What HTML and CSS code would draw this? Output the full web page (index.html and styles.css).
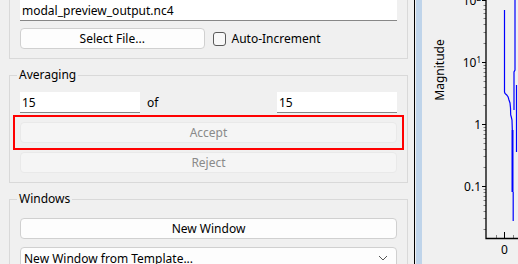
FILE: index.html
```html
<!DOCTYPE html>
<html lang="en">
<head>
  <meta charset="UTF-8" />
  <title>Modal Preview</title>
  <link rel="stylesheet" href="styles.css">
</head>
<body>

<div class="app">
  <div class="side">
    <fieldset class="group group-file">
      <input class="field" type="text" value="modal_preview_output.nc4">
      <div class="file-row">
        <button class="btn">Select File...</button>
        <label class="check"><span class="box"></span>Auto-Increment</label>
      </div>
    </fieldset>

    <fieldset class="group">
      <legend>Averaging</legend>
      <div class="avg-row">
        <input class="field" type="text" value="15">
        <span class="of">of</span>
        <input class="field" type="text" value="15">
      </div>
      <div class="highlight">
        <button class="btn" disabled>Accept</button>
      </div>
      <button class="btn" disabled>Reject</button>
    </fieldset>

    <fieldset class="group group-windows">
      <legend>Windows</legend>
      <button class="btn">New Window</button>
      <div class="combo">
        <span>New Window from Template...</span>
        <svg width="10" height="6" viewBox="0 0 10 6"><path d="M1 1 L5 5 L9 1" fill="none" stroke="#555" stroke-width="1"/></svg>
      </div>
    </fieldset>
  </div>

  <div class="splitter"></div>
  <div class="handle"></div>

  <div class="plot">
    <svg width="96" height="264" viewBox="422 0 96 264">
      <!-- y label -->
      <text class="ylabel" x="439.5" y="70" transform="rotate(-90 439.5 70)">Magnitude</text>

      <!-- tick labels -->
      <text class="tick" x="481" y="5">10<tspan class="sup" dy="-4">2</tspan></text>
      <text class="tick" x="481" y="67">10<tspan class="sup" dy="-4">1</tspan></text>
      <text class="tick" x="481" y="128.5">1</text>
      <text class="tick" x="481" y="190.5">0.1</text>
      <text class="tick mid" x="504.5" y="254">0</text>

      <!-- major ticks -->
      <g stroke="#000" stroke-width="1">
        <line x1="482" y1="0.5" x2="486" y2="0.5"/>
        <line x1="482" y1="62.5" x2="486" y2="62.5"/>
        <line x1="482" y1="124.5" x2="486" y2="124.5"/>
        <line x1="482" y1="186.5" x2="486" y2="186.5"/>
        <line x1="504.5" y1="232" x2="504.5" y2="238"/>
      </g>

      <!-- minor ticks -->
      <g stroke="#808080" stroke-width="1">
        <line x1="483.5" y1="5.5" x2="486" y2="5.5"/>
        <line x1="483.5" y1="9.5" x2="486" y2="9.5"/>
        <line x1="483.5" y1="13.5" x2="486" y2="13.5"/>
        <line x1="483.5" y1="18.5" x2="486" y2="18.5"/>
        <line x1="483.5" y1="24.5" x2="486" y2="24.5"/>
        <line x1="483.5" y1="32.5" x2="486" y2="32.5"/>
        <line x1="483.5" y1="43.5" x2="486" y2="43.5"/>

        <line x1="483.5" y1="65.5" x2="486" y2="65.5"/>
        <line x1="483.5" y1="68.5" x2="486" y2="68.5"/>
        <line x1="483.5" y1="72.5" x2="486" y2="72.5"/>
        <line x1="483.5" y1="76.5" x2="486" y2="76.5"/>
        <line x1="483.5" y1="81.5" x2="486" y2="81.5"/>
        <line x1="483.5" y1="87.5" x2="486" y2="87.5"/>
        <line x1="483.5" y1="94.5" x2="486" y2="94.5"/>
        <line x1="483.5" y1="105.5" x2="486" y2="105.5"/>

        <line x1="483.5" y1="127.5" x2="486" y2="127.5"/>
        <line x1="483.5" y1="130.5" x2="486" y2="130.5"/>
        <line x1="483.5" y1="134.5" x2="486" y2="134.5"/>
        <line x1="483.5" y1="138.5" x2="486" y2="138.5"/>
        <line x1="483.5" y1="143.5" x2="486" y2="143.5"/>
        <line x1="483.5" y1="149.5" x2="486" y2="149.5"/>
        <line x1="483.5" y1="156.5" x2="486" y2="156.5"/>
        <line x1="483.5" y1="167.5" x2="486" y2="167.5"/>

        <line x1="483.5" y1="189.5" x2="486" y2="189.5"/>
        <line x1="483.5" y1="192.5" x2="486" y2="192.5"/>
        <line x1="483.5" y1="196.5" x2="486" y2="196.5"/>
        <line x1="483.5" y1="200.5" x2="486" y2="200.5"/>
        <line x1="483.5" y1="205.5" x2="486" y2="205.5"/>
        <line x1="483.5" y1="211.5" x2="486" y2="211.5"/>
        <line x1="483.5" y1="218.5" x2="486" y2="218.5"/>
        <line x1="483.5" y1="229.5" x2="486" y2="229.5"/>

        <line x1="496.5" y1="235" x2="496.5" y2="238"/>
        <line x1="513.5" y1="235" x2="513.5" y2="238"/>
      </g>

      <!-- axes -->
      <path d="M486 0 V238.5 H518" fill="none" stroke="#000" stroke-width="1.3"/>

      <!-- data -->
      <g fill="none" stroke="#0000ff" stroke-width="1.2">
        <polyline points="504.5,10 504.5,92 505,93.5 506.7,95 508,96.7 509,100 510,103 510.5,108 510.7,115 511.3,117 512,120 512.3,130"/>
        <line x1="512.5" y1="130" x2="512.5" y2="192" stroke-width="2"/>
        <line x1="513.2" y1="192" x2="513.2" y2="221"/>
        <polyline points="515,0 515,70 514,72 514,110"/>
        <line x1="516.5" y1="85" x2="516.5" y2="152"/>
      </g>
    </svg>
  </div>
</div>

</body>
</html>
```

FILE: styles.css
```css
* {
  box-sizing: border-box;
}

body {
  margin: 0;
  padding: 0;
  font-family: 'Noto Sans', sans-serif;
  font-size: 12px;
  color: #000;
  background: #f0f0f0;
  overflow: hidden;
}

.app {
  display: flex;
  height: 264px;
  overflow: hidden;
}

.side {
  width: 414px;
  flex-shrink: 0;
  padding-left: 9px;
}

.group {
  width: 399px;
  margin: 8px 0 0 0;
  padding: 9px 10px 9px 10px;
  border: 1px solid #d9d9d9;
  min-width: 0;
}

.group-file {
  margin-top: -10px;
}

.group legend {
  padding: 0 2px;
  margin-left: -3px;
  line-height: 16px;
}

.field {
  display: block;
  width: 100%;
  height: 21px;
  border: none;
  border-bottom: 1px solid #878787;
  background: #fff;
  padding: 0 2px;
  font-family: inherit;
  font-size: 12px;
  color: #000;
  outline: none;
}

.btn {
  display: block;
  width: 100%;
  height: 21px;
  padding: 0;
  font-family: inherit;
  font-size: 12px;
  color: #000;
  background: #fdfdfd;
  border: 1px solid #d0d0d0;
  border-radius: 4px;
}

.btn:disabled {
  color: #8a8a8a;
  background: #f5f5f5;
  border-color: #e9e9e9;
}

.file-row {
  display: grid;
  grid-template-columns: 1fr 1fr;
  gap: 8px;
  margin-top: 7px;
}

.check {
  display: flex;
  align-items: center;
  gap: 6px;
}

.check .box {
  width: 13px;
  height: 14px;
  border: 1px solid #5a5a5a;
  border-radius: 3px;
  background: #f8f8f8;
}

.avg-row {
  display: grid;
  grid-template-columns: 120px 1fr 120px;
  gap: 7px;
  align-items: center;
}

.highlight {
  position: relative;
  margin: 9px 0;
}

.highlight::after {
  content: "";
  position: absolute;
  top: -7px;
  left: -7px;
  right: -7px;
  bottom: -7px;
  border: 2px solid #ff0000;
}

.group-windows {
  padding-top: 11px;
}

.combo {
  display: flex;
  align-items: center;
  justify-content: space-between;
  height: 22px;
  margin-top: 8px;
  padding: 0 8px 0 3px;
  background: #fdfdfd;
  border: 1px solid #d0d0d0;
  border-radius: 4px;
}

.splitter {
  width: 1px;
  background: #000;
}

.handle {
  width: 6px;
  margin-left: 1px;
  background: #bfd4ea;
}

.plot {
  flex: 1;
}

.plot svg {
  display: block;
}

.plot text {
  font-family: 'Noto Sans', sans-serif;
  font-size: 12px;
  fill: #000;
}

.plot .tick {
  text-anchor: end;
}

.plot .tick.mid {
  text-anchor: middle;
}

.plot .sup {
  font-size: 8px;
}

.plot .ylabel {
  text-anchor: middle;
  dominant-baseline: central;
}
```
